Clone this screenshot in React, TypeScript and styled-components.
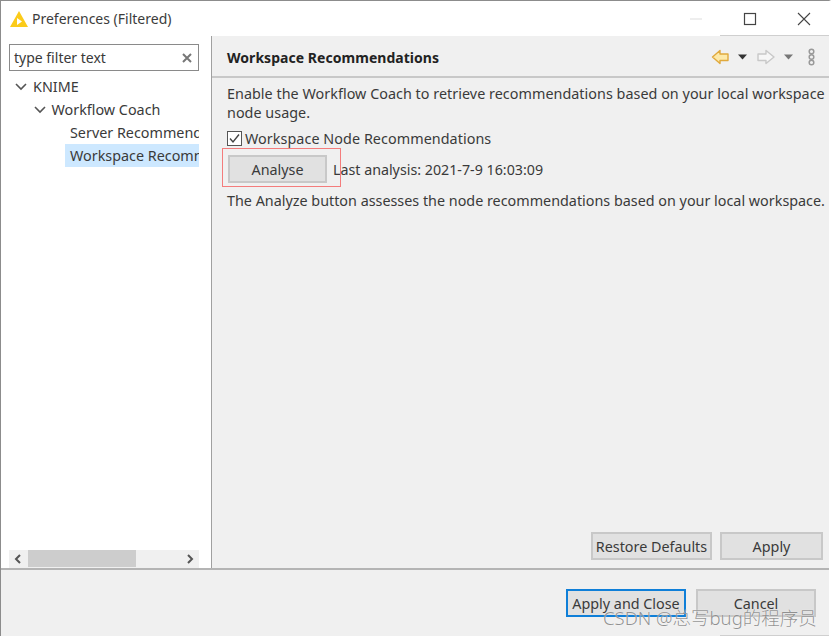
import React from "react";
import styled, { createGlobalStyle } from "styled-components";

const Global = createGlobalStyle`
  html, body { margin: 0; padding: 0; background: #fff; }
  #root { width: 831px; height: 636px; overflow: hidden; }
  * { box-sizing: border-box; }
`;

const Win = styled.div`
  position: relative;
  width: 831px;
  height: 636px;
  display: flex;
  flex-direction: column;
  border-top: 1px solid #8c8c8c;
  border-left: 1px solid #8c8c8c;
  border-right: 2px solid #fff;
  font-family: "Noto Sans", "Open Sans", sans-serif;
  font-size: 14.35px;
  color: #3a3a3a;
  background: #fff;
`;
const TitleBar = styled.div`
  position: relative;
  height: 35px;
  display: flex;
  align-items: center;
  flex: none;
  margin-right: -2px;
  &::after {
    content: "";
    position: absolute;
    right: 2px;
    bottom: 0;
    width: 109px;
    height: 1px;
    background: #cfcfcf;
  }
`;
const Logo = styled.svg`
  width: 18px;
  height: 16px;
  margin-left: 9px;
  margin-right: 4px;
`;
const Title = styled.div`
  flex: 1;
  font-size: 14px;
  color: #3c3c3c;
  margin-top: -1px;
`;
const WinButton = styled.svg`
  width: 54px;
  height: 18px;
  flex: none;
`;
const Main = styled.div`
  flex: 1;
  display: flex;
  min-height: 0;
`;
const Side = styled.div`
  width: 211px;
  flex: none;
  display: flex;
  flex-direction: column;
  padding: 8px 12px 0 8px;
  border-right: 1px solid #a0a0a0;
`;
const Filter = styled.div`
  height: 27px;
  border: 1px solid #8a8a8a;
  display: flex;
  align-items: center;
  justify-content: space-between;
  padding: 0 6px 0 4px;
  font-size: 14px;
  flex: none;
`;
const Tree = styled.div`
  flex: 1;
  padding-top: 4px;
  overflow: hidden;
  white-space: nowrap;
`;
const Row = styled.div<{ $indent: number; $selected?: boolean }>`
  height: 23px;
  display: flex;
  align-items: center;
  padding-left: ${(p) => p.$indent}px;
  margin-left: ${(p) => (p.$selected ? 56 : 0)}px;
  background: ${(p) => (p.$selected ? "#cde8ff" : "transparent")};
  overflow: hidden;
`;
const Chevron = styled.svg`
  width: 12px;
  height: 8px;
  margin-right: 6px;
  flex: none;
`;
const HScroll = styled.div`
  position: relative;
  height: 18px;
  flex: none;
  background: #f0f0f0;
  display: flex;
  align-items: center;
  justify-content: space-between;
  padding: 0 4px;
`;
const Thumb = styled.div`
  position: absolute;
  left: 19px;
  top: 0;
  width: 108px;
  height: 17px;
  background: #cdcdcd;
`;
const Content = styled.div`
  flex: 1;
  display: flex;
  flex-direction: column;
  background: #f0f0f0;
  min-width: 0;
`;
const Header = styled.div`
  height: 42px;
  flex: none;
  display: flex;
  align-items: center;
  padding: 1px 12px 0 15px;
  border-bottom: 2px solid #c8c8c8;
`;
const HeaderTitle = styled.div`
  flex: 1;
  font-weight: 700;
  font-size: 14px;
  letter-spacing: 0.04px;
  color: #222;
  margin-top: 1px;
`;
const Body = styled.div`
  flex: 1;
  padding: 6px 0 0 15px;
  display: flex;
  flex-direction: column;
  white-space: nowrap;
`;
const Para = styled.div`
  line-height: 19px;
  letter-spacing: 0.035px;
`;
const CheckRow = styled.div`
  display: flex;
  align-items: center;
  gap: 3px;
  height: 20px;
  margin-top: 6px;
  letter-spacing: 0.06px;
`;
const Check = styled.svg`
  width: 15px;
  height: 15px;
  flex: none;
`;
const AnalyseRow = styled.div`
  display: flex;
  align-items: center;
  gap: 6px;
  margin-top: 6px;
  padding-left: 1px;
  height: 30px;
`;
const AnalysisText = styled.span`
  font-size: 14.25px;
`;
const Button = styled.div<{ $w: number; $focus?: boolean }>`
  width: ${(p) => p.$w}px;
  height: 28px;
  display: flex;
  align-items: center;
  justify-content: center;
  background: #e1e1e1;
  border: ${(p) => (p.$focus ? "2px solid #0f7fd8" : "2px solid #c8c8c8")};
  flex: none;
`;
const Note = styled.div`
  margin-top: 7px;
  line-height: 20px;
`;
const RedBox = styled.div`
  position: absolute;
  left: 221px;
  top: 147px;
  width: 119px;
  height: 39px;
  border: 1px solid #f47c7c;
`;
const ActionRow = styled.div`
  display: flex;
  justify-content: flex-end;
  gap: 8px;
  padding: 0 6px 8px 0;
  flex: none;
`;
const Footer = styled.div`
  position: relative;
  height: 68px;
  flex: none;
  background: #f0f0f0;
  border-top: 2px solid #b4b4b4;
  display: flex;
  justify-content: flex-end;
  gap: 10px;
  padding: 19px 13px 0 0;
  &::after {
    content: "";
    position: absolute;
    right: 0;
    bottom: 0;
    width: 109px;
    height: 1px;
    background: #cfcfcf;
  }
`;
const Watermark = styled.div`
  position: absolute;
  left: 602px;
  top: 603px;
  font-size: 18.5px;
  font-weight: 300;
  color: rgba(110, 110, 110, 0.75);
  text-shadow: 0 0 1px #fff;
  font-family: "Noto Sans", "Noto Sans CJK SC", sans-serif;
  white-space: nowrap;
`;

export default function App() {
  return (
    <>
      <Global />
      <Win>
        <TitleBar>
          <Logo viewBox="0 0 18 16">
            <path d="M9 0 L18 16 L0 16 Z" fill="#fbcb1a" />
            <path d="M7 7 L12 10.5 L7 14 Z" fill="#fff" />
          </Logo>
          <Title>Preferences (Filtered)</Title>
          <WinButton viewBox="0 0 54 18">
            <path d="M21 9 H33" stroke="#eee" strokeWidth="2" />
          </WinButton>
          <WinButton viewBox="0 0 54 18">
            <rect x="21.5" y="3.5" width="11" height="11" fill="none" stroke="#444" strokeWidth="1.2" />
          </WinButton>
          <WinButton viewBox="0 0 54 18">
            <path d="M21 3 L33 15 M33 3 L21 15" stroke="#444" strokeWidth="1.1" fill="none" />
          </WinButton>
        </TitleBar>
        <Main>
          <Side>
            <Filter>
              <span>type filter text</span>
              <svg width="10" height="10" viewBox="0 0 10 10">
                <path d="M1 1 L9 9 M9 1 L1 9" stroke="#777" strokeWidth="2" />
              </svg>
            </Filter>
            <Tree>
              <Row $indent={6}>
                <Chevron viewBox="0 0 12 8"><path d="M1 1 L6 6 L11 1" stroke="#555" strokeWidth="1.6" fill="none" /></Chevron>
                KNIME
              </Row>
              <Row $indent={24.5}>
                <Chevron viewBox="0 0 12 8"><path d="M1 1 L6 6 L11 1" stroke="#555" strokeWidth="1.6" fill="none" /></Chevron>
                Workflow Coach
              </Row>
              <Row $indent={61}>Server Recommendations</Row>
              <Row $indent={5} $selected>Workspace Recommendations</Row>
            </Tree>
            <HScroll>
              <svg width="10" height="12" viewBox="0 0 10 12"><path d="M7 2 L3 6 L7 10" stroke="#555" strokeWidth="2" fill="none" /></svg>
              <Thumb />
              <svg width="10" height="12" viewBox="0 0 10 12"><path d="M3 2 L7 6 L3 10" stroke="#555" strokeWidth="2" fill="none" /></svg>
            </HScroll>
          </Side>
          <Content>
            <Header>
              <HeaderTitle>Workspace Recommendations</HeaderTitle>
              <svg width="106" height="18" viewBox="0 0 106 18">
                <path d="M1.5 9 L9 2.5 V6 H17 V12.5 H9 V15.5 Z" fill="#fde9a8" stroke="#e0a93c" strokeWidth="1.4" strokeLinejoin="round" />
                <path d="M27 6.5 H36 L31.5 11.5 Z" fill="#333" />
                <path d="M63 9 L55 2.5 V6 H47 V12.5 H55 V15.5 Z" fill="#f6f6f6" stroke="#c8c8c8" strokeWidth="1.4" strokeLinejoin="round" />
                <path d="M73 6.5 H82 L77.5 11.5 Z" fill="#777" />
                <circle cx="100.5" cy="3.5" r="2.3" fill="none" stroke="#999" strokeWidth="1.5" />
                <circle cx="100.5" cy="9" r="2.3" fill="none" stroke="#999" strokeWidth="1.5" />
                <circle cx="100.5" cy="14.5" r="2.3" fill="none" stroke="#999" strokeWidth="1.5" />
              </svg>
            </Header>
            <Body>
              <Para>
                Enable the Workflow Coach to retrieve recommendations based on your local workspace
                <br />
                node usage.
              </Para>
              <CheckRow>
                <Check viewBox="0 0 15 15">
                  <rect x="0.5" y="0.5" width="14" height="14" fill="#fff" stroke="#555" />
                  <path d="M3 7.5 L6 11 L12 3.5" stroke="#444" strokeWidth="1.4" fill="none" />
                </Check>
                Workspace Node Recommendations
              </CheckRow>
              <AnalyseRow>
                <Button $w={99}>Analyse</Button>
                <AnalysisText>Last analysis: 2021-7-9 16:03:09</AnalysisText>
              </AnalyseRow>
              <Note>The Analyze button assesses the node recommendations based on your local workspace.</Note>
            </Body>
            <ActionRow>
              <Button $w={121}>Restore Defaults</Button>
              <Button $w={103}>Apply</Button>
            </ActionRow>
          </Content>
        </Main>
        <Footer>
          <Button $w={120} $focus>Apply and Close</Button>
          <Button $w={120}>Cancel</Button>
        </Footer>
        <RedBox />
        <Watermark>CSDN @总写bug的程序员</Watermark>
      </Win>
    </>
  );
}
